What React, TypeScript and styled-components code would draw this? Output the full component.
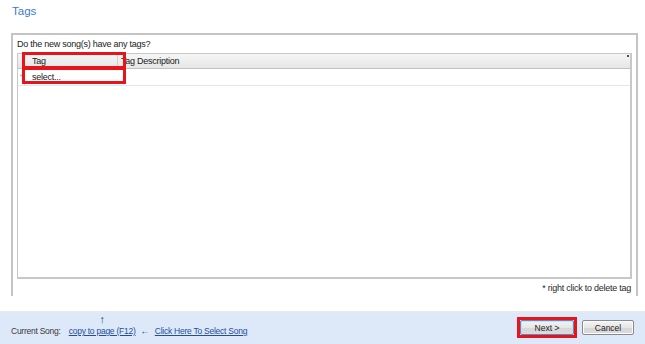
import React from 'react'
import styled, { createGlobalStyle } from 'styled-components'

const GlobalStyle = createGlobalStyle`
  html, body {
    margin: 0;
    padding: 0;
    background: #ffffff;
  }
  body {
    font-family: 'Liberation Sans', Arial, sans-serif;
    font-size: 9px;
    letter-spacing: -0.25px;
    color: #222222;
  }
`

const Page = styled.div`
  width: 645px;
  height: 344px;
  display: flex;
  flex-direction: column;
  overflow: hidden;
`

const Title = styled.div`
  height: 33px;
  padding: 5px 0 0 12px;
  box-sizing: border-box;
  font-size: 11.5px;
  letter-spacing: 0;
  color: #3c80c8;
`

const Panel = styled.div`
  height: 263px;
  margin: 0 7px 0 11px;
  border: 2px solid #c4c4c4;
  border-bottom: none;
  box-sizing: border-box;
  display: flex;
  flex-direction: column;
  padding: 3px 4px 0 4px;
`

const Question = styled.div`
  height: 15px;
  line-height: 12px;
`

const Grid = styled.div`
  position: relative;
  height: 226px;
  border: 1px solid #c8c8c8;
  border-right-width: 2px;
  border-bottom-width: 2px;
  box-sizing: border-box;
  display: flex;
  flex-direction: column;
`

const Row = styled.div<{ $head?: boolean }>`
  display: grid;
  grid-template-columns: 7px 93px 1fr;
  height: ${(p) => (p.$head ? '14px' : '16px')};
  line-height: ${(p) => (p.$head ? '14px' : '16px')};
  background: ${(p) =>
    p.$head ? 'linear-gradient(#f6f6f6, #e6e6e6)' : '#ffffff'};
  border-bottom: 1px solid ${(p) => (p.$head ? '#c2c2c2' : '#dfe8f0')};
`

const Cell = styled.div<{ $divider?: boolean }>`
  padding-left: ${(p) => (p.$divider ? '7px' : '3px')};
  white-space: nowrap;
  overflow: hidden;
  border-right: ${(p) => (p.$divider ? '1px solid #cfcfcf' : 'none')};
`

const DataCell = styled.div`
  padding-left: 7px;
  white-space: nowrap;
`

const RowMark = styled.div`
  border-right: 1px solid #d4d4d4;
  color: #a8a8a8;
  font-size: 7px;
  text-align: center;
`

const CornerDot = styled.div`
  position: absolute;
  top: 1px;
  right: 1px;
  width: 2px;
  height: 2px;
  background: #505050;
`

const Highlight = styled.div<{ $top: number; $height: number }>`
  position: absolute;
  left: 4px;
  width: 104px;
  top: ${(p) => p.$top}px;
  height: ${(p) => p.$height}px;
  border: 3px solid #e8141c;
  box-sizing: border-box;
  pointer-events: none;
`

const Note = styled.div`
  text-align: right;
  padding: 4px 0 0 0;
  margin-right: 1px;
  color: #2a2a2a;
`

const Footer = styled.div`
  margin-top: auto;
  height: 33px;
  background: #dde9f8;
  border-top: 2px solid #e6e9ee;
  box-sizing: border-box;
  display: flex;
  align-items: flex-start;
  padding: 0 8px 0 11px;
  font-size: 8.5px;
`

const Label = styled.div`
  margin-top: 12px;
  line-height: 12px;
  color: #3a3a3a;
`

const LinkStack = styled.div`
  display: flex;
  flex-direction: column;
  align-items: center;
  margin-left: 8px;
`

const UpArrow = styled.div`
  height: 12px;
  line-height: 12px;
  font-size: 11px;
  font-weight: bold;
  color: #1f3f7c;
`

const Link = styled.a`
  color: #1f4e9c;
  text-decoration: underline;
  line-height: 12px;
  cursor: pointer;
`

const LeftArrow = styled.span`
  margin: 12px 6px 0 5px;
  line-height: 12px;
  font-weight: bold;
  color: #1f3f7c;
`

const Buttons = styled.div`
  margin-left: auto;
  margin-top: 4px;
  display: flex;
  align-items: center;
  gap: 2px;
`

const Frame = styled.div<{ $on?: boolean }>`
  border: 3px solid ${(p) => (p.$on ? '#e8141c' : 'transparent')};
  padding: 0;
`

const Button = styled.button<{ $w: number; $focus?: boolean }>`
  width: ${(p) => p.$w}px;
  height: 15px;
  padding: 0;
  font: 8.5px 'Liberation Sans', Arial, sans-serif;
  color: #222;
  border: 1px solid ${(p) => (p.$focus ? '#5b8bb8' : '#8a8a8a')};
  border-radius: 2px;
  background: linear-gradient(#f4f4f4 0%, #e6e6e6 50%, #d6d6d6 51%, #dcdcdc 100%);
  box-shadow: inset 0 0 0 1px ${(p) => (p.$focus ? '#c6e0f4' : '#fbfbfb')};
`

export default function App() {
  return (
    <Page>
      <GlobalStyle />
      <Title>Tags</Title>
      <Panel>
        <Question>Do the new song(s) have any tags?</Question>
        <Grid>
          <Row $head>
            <RowMark />
            <Cell $divider>Tag</Cell>
            <Cell>Tag Description</Cell>
          </Row>
          <Row>
            <RowMark>*</RowMark>
            <DataCell>select...</DataCell>
            <DataCell />
          </Row>
          <CornerDot />
          <Highlight $top={-2} $height={17} />
          <Highlight $top={13} $height={17} />
        </Grid>
        <Note>* right click to delete tag</Note>
      </Panel>
      <Footer>
        <Label>Current Song:</Label>
        <LinkStack>
          <UpArrow>↑</UpArrow>
          <Link>copy to page (F12)</Link>
        </LinkStack>
        <LeftArrow>←</LeftArrow>
        <Label>
          <Link>Click Here To Select Song</Link>
        </Label>
        <Buttons>
          <Frame $on>
            <Button $w={54} $focus>
              Next &gt;
            </Button>
          </Frame>
          <Frame>
            <Button $w={52}>Cancel</Button>
          </Frame>
        </Buttons>
      </Footer>
    </Page>
  )
}
